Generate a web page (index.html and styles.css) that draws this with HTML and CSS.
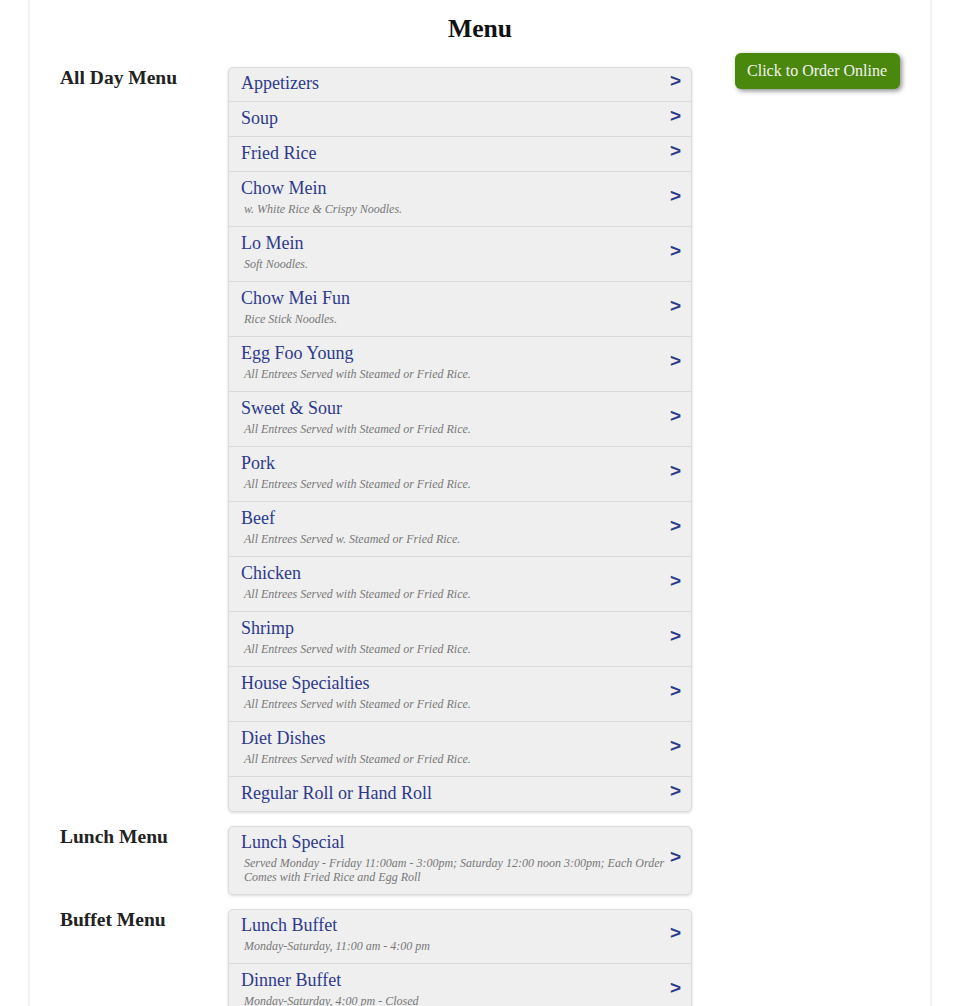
FILE: index.html
```html
<!DOCTYPE html>
<html lang="en">
<head>
<meta charset="utf-8">
<title>Menu</title>
<link rel="stylesheet" href="styles.css">
</head>
<body>
<div class="page">
  <h1 class="title">Menu</h1>
  <div class="layout">
    <div class="sections">
      <section class="section">
        <h2 class="label">All Day Menu</h2>
        <ul class="list">
          <li class="row"><div class="text"><div class="name">Appetizers</div></div><span class="arrow">&gt;</span></li>
          <li class="row"><div class="text"><div class="name">Soup</div></div><span class="arrow">&gt;</span></li>
          <li class="row"><div class="text"><div class="name">Fried Rice</div></div><span class="arrow">&gt;</span></li>
          <li class="row"><div class="text"><div class="name">Chow Mein</div><div class="desc">w. White Rice &amp; Crispy Noodles.</div></div><span class="arrow">&gt;</span></li>
          <li class="row"><div class="text"><div class="name">Lo Mein</div><div class="desc">Soft Noodles.</div></div><span class="arrow">&gt;</span></li>
          <li class="row"><div class="text"><div class="name">Chow Mei Fun</div><div class="desc">Rice Stick Noodles.</div></div><span class="arrow">&gt;</span></li>
          <li class="row"><div class="text"><div class="name">Egg Foo Young</div><div class="desc">All Entrees Served with Steamed or Fried Rice.</div></div><span class="arrow">&gt;</span></li>
          <li class="row"><div class="text"><div class="name">Sweet &amp; Sour</div><div class="desc">All Entrees Served with Steamed or Fried Rice.</div></div><span class="arrow">&gt;</span></li>
          <li class="row"><div class="text"><div class="name">Pork</div><div class="desc">All Entrees Served with Steamed or Fried Rice.</div></div><span class="arrow">&gt;</span></li>
          <li class="row"><div class="text"><div class="name">Beef</div><div class="desc">All Entrees Served w. Steamed or Fried Rice.</div></div><span class="arrow">&gt;</span></li>
          <li class="row"><div class="text"><div class="name">Chicken</div><div class="desc">All Entrees Served with Steamed or Fried Rice.</div></div><span class="arrow">&gt;</span></li>
          <li class="row"><div class="text"><div class="name">Shrimp</div><div class="desc">All Entrees Served with Steamed or Fried Rice.</div></div><span class="arrow">&gt;</span></li>
          <li class="row"><div class="text"><div class="name">House Specialties</div><div class="desc">All Entrees Served with Steamed or Fried Rice.</div></div><span class="arrow">&gt;</span></li>
          <li class="row"><div class="text"><div class="name">Diet Dishes</div><div class="desc">All Entrees Served with Steamed or Fried Rice.</div></div><span class="arrow">&gt;</span></li>
          <li class="row"><div class="text"><div class="name">Regular Roll or Hand Roll</div></div><span class="arrow">&gt;</span></li>
        </ul>
      </section>
      <section class="section">
        <h2 class="label">Lunch Menu</h2>
        <ul class="list">
          <li class="row"><div class="text"><div class="name">Lunch Special</div><div class="desc">Served Monday - Friday 11:00am - 3:00pm; Saturday 12:00 noon 3:00pm; Each Order Comes with Fried Rice and Egg Roll</div></div><span class="arrow">&gt;</span></li>
        </ul>
      </section>
      <section class="section">
        <h2 class="label">Buffet Menu</h2>
        <ul class="list">
          <li class="row"><div class="text"><div class="name">Lunch Buffet</div><div class="desc">Monday-Saturday, 11:00 am - 4:00 pm</div></div><span class="arrow">&gt;</span></li>
          <li class="row"><div class="text"><div class="name">Dinner Buffet</div><div class="desc">Monday-Saturday, 4:00 pm - Closed</div></div><span class="arrow">&gt;</span></li>
        </ul>
      </section>
    </div>
    <aside class="aside">
      <a class="order" href="#">Click to Order Online</a>
    </aside>
  </div>
</div>
</body>
</html>
```

FILE: styles.css
```css
html, body {
  margin: 0;
  padding: 0;
  background: #ffffff;
}

body {
  font-family: "Liberation Serif", "Times New Roman", serif;
  color: #222222;
}

.page {
  width: 840px;
  margin: 0 auto;
  padding: 14px 30px 40px;
  border-left: 2px solid #f1f1f1;
  border-right: 2px solid #f1f1f1;
  min-height: 1100px;
}

.title {
  margin: 0;
  text-align: center;
  font-size: 25.6px;
  font-weight: bold;
  line-height: 29px;
  color: #111111;
}

.layout {
  display: grid;
  grid-template-columns: 632px 1fr;
  margin-top: 10px;
}

.sections {
  padding-top: 14px;
  display: flex;
  flex-direction: column;
  gap: 14px;
}

.section {
  display: grid;
  grid-template-columns: 168px 464px;
  align-items: start;
}

.label {
  margin: 0;
  font-size: 19.5px;
  font-weight: bold;
  line-height: 22px;
  color: #222222;
}

.list {
  list-style: none;
  margin: 0;
  padding: 0;
  background: #efefef;
  border: 1px solid #dcdcdc;
  border-radius: 5px;
  box-shadow: 0 1px 3px rgba(0, 0, 0, 0.15);
}

.row {
  display: flex;
  align-items: center;
  padding: 5px 10px 6px 12px;
  border-top: 1px solid #dadada;
}

.row:first-child {
  border-top: none;
  padding-top: 4px;
}

.text {
  flex: 1;
  min-width: 0;
}

.name {
  font-size: 18px;
  line-height: 23px;
  color: #2c3a8c;
}

.desc {
  margin: 2px 0 0 3px;
  padding-bottom: 4px;
  font-size: 12px;
  line-height: 14px;
  font-style: italic;
  color: #777777;
}

.arrow {
  flex: none;
  margin: -6px 0 0 2px;
  font-family: "Liberation Sans", Arial, sans-serif;
  font-weight: bold;
  font-size: 19px;
  line-height: 20px;
  color: #2c3a8c;
}

.aside {
  display: flex;
  justify-content: flex-end;
  align-items: flex-start;
}

.order {
  display: inline-block;
  padding: 8px 13px 8px 12px;
  font-size: 16px;
  line-height: 20px;
  color: #f4f4f4;
  text-decoration: none;
  background: #4a870d;
  border-radius: 6px;
  box-shadow: 2px 2px 5px rgba(0, 0, 0, 0.45);
}
```
